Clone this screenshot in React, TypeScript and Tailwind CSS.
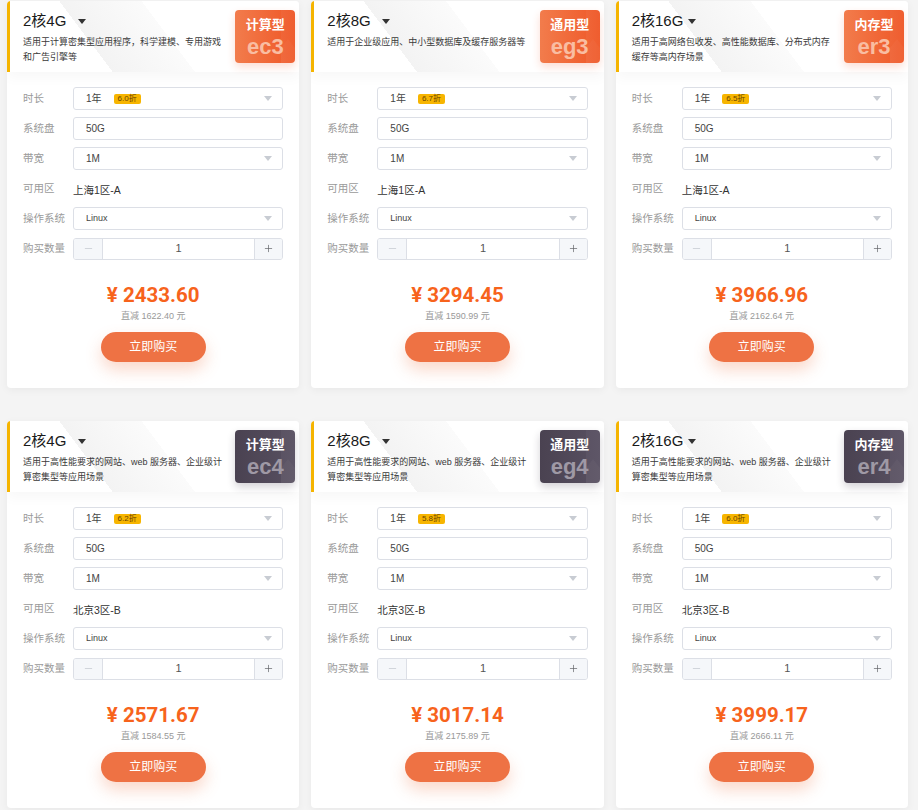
import { Minus, Plus } from "lucide-react";

interface Plan {
  title: string;
  desc: string[];
  kind: string;
  code: string;
  dark: boolean;
  discount: string;
  zone: string;
  price: string;
  saved: string;
}

const plans: Plan[] = [
  {
    title: "2核4G",
    desc: ["适用于计算密集型应用程序，科学建模、专用游戏", "和广告引擎等"],
    kind: "计算型",
    code: "ec3",
    dark: false,
    discount: "6.0折",
    zone: "上海1区-A",
    price: "2433.60",
    saved: "1622.40",
  },
  {
    title: "2核8G",
    desc: ["适用于企业级应用、中小型数据库及缓存服务器等"],
    kind: "通用型",
    code: "eg3",
    dark: false,
    discount: "6.7折",
    zone: "上海1区-A",
    price: "3294.45",
    saved: "1590.99",
  },
  {
    title: "2核16G",
    desc: ["适用于高网络包收发、高性能数据库、分布式内存", "缓存等高内存场景"],
    kind: "内存型",
    code: "er3",
    dark: false,
    discount: "6.5折",
    zone: "上海1区-A",
    price: "3966.96",
    saved: "2162.64",
  },
  {
    title: "2核4G",
    desc: ["适用于高性能要求的网站、web 服务器、企业级计", "算密集型等应用场景"],
    kind: "计算型",
    code: "ec4",
    dark: true,
    discount: "6.2折",
    zone: "北京3区-B",
    price: "2571.67",
    saved: "1584.55",
  },
  {
    title: "2核8G",
    desc: ["适用于高性能要求的网站、web 服务器、企业级计", "算密集型等应用场景"],
    kind: "通用型",
    code: "eg4",
    dark: true,
    discount: "5.8折",
    zone: "北京3区-B",
    price: "3017.14",
    saved: "2175.89",
  },
  {
    title: "2核16G",
    desc: ["适用于高性能要求的网站、web 服务器、企业级计", "算密集型等应用场景"],
    kind: "内存型",
    code: "er4",
    dark: true,
    discount: "6.0折",
    zone: "北京3区-B",
    price: "3999.17",
    saved: "2666.11",
  },
];

const Caret = ({ className }: { className?: string }) => (
  <svg width="8" height="5" viewBox="0 0 8 5" className={className}>
    <path d="M0 0h8L4 5z" fill="currentColor" />
  </svg>
);

const Select = ({ children }: { children: React.ReactNode }) => (
  <div className="flex h-[23px] items-center rounded-[3px] border border-[#dcdfe6] bg-white pl-[12px] pr-[10px]">
    <div className="flex flex-1 items-center">{children}</div>
    <Caret className="text-[#c8ccd3]" />
  </div>
);

const Row = ({ label, children }: { label: string; children: React.ReactNode }) => (
  <div className="flex h-[23px] items-center">
    <span className="w-[50px] shrink-0 text-[10.5px] text-[#9a9a9a]">{label}</span>
    <div className="flex-1">{children}</div>
  </div>
);

// the coloured type tag in the top right of each card
const Badge = ({ plan }: { plan: Plan }) => (
  <div
    className={`absolute right-[4px] top-[9px] flex h-[53px] w-[60px] flex-col items-center overflow-hidden rounded-[4px] ${
      plan.dark
        ? "bg-[linear-gradient(90deg,#4a4251,#585061)] shadow-[0_4px_8px_rgba(40,30,50,0.2)]"
        : "bg-[linear-gradient(90deg,#f27c4c,#ef5727)] shadow-[0_4px_8px_rgba(239,87,39,0.2)]"
    }`}
  >
    <svg className="absolute inset-0" width="60" height="53" viewBox="0 0 60 53">
      <rect x="46" y="0" width="14" height="53" fill="rgba(255,255,255,0.04)" />
      <path d="M46 38L53 29L60 38V53H46z" fill="rgba(255,255,255,0.03)" />
    </svg>
    <span className="relative mt-[7px] text-[13px] font-bold leading-[16px] text-white">{plan.kind}</span>
    <span
      className={`relative mt-[2px] font-['Liberation_Sans',sans-serif] text-[22px] font-bold leading-[24px] ${
        plan.dark ? "text-[#9f99a5]" : "text-[#f9bda2]"
      }`}
    >
      {plan.code}
    </span>
  </div>
);

const Card = ({ plan }: { plan: Plan }) => (
  <div className="flex h-[387px] flex-col overflow-hidden rounded-[4px] bg-white shadow-[0_2px_8px_rgba(0,0,0,0.05)]">
    <div className="relative z-10 h-[71px] shrink-0 border-l-[3px] border-[#f5b400] bg-[linear-gradient(53deg,#fff_0,#fff_30%,#f3f3f3_30%,#fbfbfb_54%,#fff_54%)] pl-[13px] shadow-[0_6px_12px_rgba(0,0,0,0.03)]">
      <div className="flex items-center pt-[10px]">
        <span className="min-w-[50px] text-[15px] leading-[20px] text-[#1a1a1a]">{plan.title}</span>
        <Caret className="ml-[5px] text-[#333]" />
      </div>
      <div className="mt-[4px] text-[9px] leading-[15px] text-[#3a3a3a]">
        {plan.desc.map((d) => (
          <div key={d}>{d}</div>
        ))}
      </div>
      <Badge plan={plan} />
    </div>
    <div className="flex flex-1 flex-col px-[16px] pt-[15px]">
      <div className="flex flex-col gap-[7px]">
        <Row label="时长">
          <Select>
            <span className="text-[10px] text-[#444]">1年</span>
            <span className="ml-[12px] rounded-[2px] bg-[#f7b500] px-[4px] text-[8px] leading-[10px] text-[#6b4400]">
              {plan.discount}
            </span>
          </Select>
        </Row>
        <Row label="系统盘">
          <div className="flex h-[23px] items-center rounded-[3px] border border-[#dcdfe6] pl-[12px] text-[10px] text-[#444]">
            50G
          </div>
        </Row>
        <Row label="带宽">
          <Select>
            <span className="text-[10px] text-[#444]">1M</span>
          </Select>
        </Row>
        <Row label="可用区">
          <span className="text-[10.5px] text-[#333]">{plan.zone}</span>
        </Row>
        <Row label="操作系统">
          <Select>
            <span className="text-[9px] text-[#444]">Linux</span>
          </Select>
        </Row>
        <Row label="购买数量">
          <div className="flex h-[22px] items-stretch overflow-hidden rounded-[3px] border border-[#dcdfe6]">
            <div className="flex w-[29px] items-center justify-center border-r border-[#dcdfe6] bg-[#f5f7fa] text-[#c0c4cc]">
              <Minus size={11} strokeWidth={1.5} />
            </div>
            <div className="flex flex-1 items-center justify-center text-[11px] text-[#555]">1</div>
            <div className="flex w-[28px] items-center justify-center border-l border-[#dcdfe6] bg-[#f5f7fa] text-[#606266]">
              <Plus size={11} strokeWidth={1.5} />
            </div>
          </div>
        </Row>
      </div>
      <div className="mt-[22px] text-center font-['Roboto',sans-serif] text-[20.5px] font-bold leading-[26px] text-[#f7631c]">
        ¥ {plan.price}
      </div>
      <div className="mt-[2px] text-center text-[9px] leading-[12px] text-[#999]">直减 {plan.saved} 元</div>
      <div className="mt-[10px] flex justify-center">
        <button className="h-[30px] w-[105px] rounded-full bg-[#ee7244] text-[12px] text-white shadow-[0_8px_16px_rgba(238,114,68,0.28)]">
          立即购买
        </button>
      </div>
    </div>
  </div>
);

export default function App() {
  return (
    <div className="min-h-[810px] bg-[#f4f4f4] pb-[2px] pl-[7px] pr-[10px] pt-[1px] font-['Liberation_Sans','Noto_Sans_CJK_SC',sans-serif]">
      <div className="grid grid-cols-3 gap-x-[12px] gap-y-[33px]">
        {plans.map((p) => (
          <Card key={p.code} plan={p} />
        ))}
      </div>
    </div>
  );
}
